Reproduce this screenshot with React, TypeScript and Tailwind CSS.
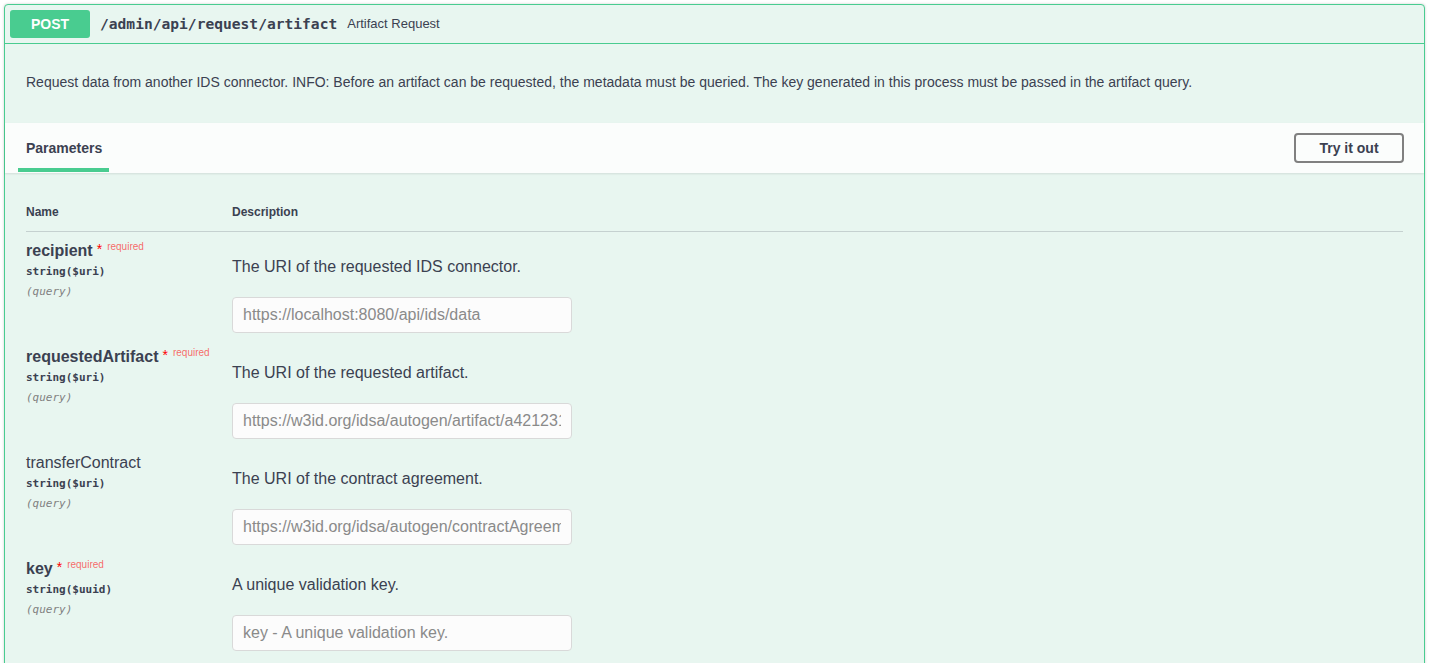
const sans = 'font-["Liberation_Sans",Arial,sans-serif]';
const mono = 'font-["DejaVu_Sans_Mono","Liberation_Mono",monospace]';

type Param = {
  name: string;
  required: boolean;
  type: string;
  description: string;
  placeholder: string;
};

const params: Param[] = [
  {
    name: 'recipient',
    required: true,
    type: 'string($uri)',
    description: 'The URI of the requested IDS connector.',
    placeholder: 'https://localhost:8080/api/ids/data',
  },
  {
    name: 'requestedArtifact',
    required: true,
    type: 'string($uri)',
    description: 'The URI of the requested artifact.',
    placeholder: 'https://w3id.org/idsa/autogen/artifact/a4212311-86e4-40b3-ace3-ef29cd687cf9',
  },
  {
    name: 'transferContract',
    required: false,
    type: 'string($uri)',
    description: 'The URI of the contract agreement.',
    placeholder: 'https://w3id.org/idsa/autogen/contractAgreement/a4212311-86e4-40b3-ace3-ef29cd687cf9',
  },
  {
    name: 'key',
    required: true,
    type: 'string($uuid)',
    description: 'A unique validation key.',
    placeholder: 'key - A unique validation key.',
  },
];

function ParamRow({ p }: { p: Param }) {
  return (
    <div className="flex h-[106px]">
      <div className="w-[206px] shrink-0 pt-[9px]">
        <div className="flex items-start leading-[20px]">
          <span className={`text-[16px] ${p.required ? 'font-bold' : 'font-normal'} text-[#3b4151]`}>
            {p.name}
          </span>
          {p.required && (
            <>
              <span className="ml-[4px] text-[14px] leading-[16px] text-[#ff0000]">*</span>
              <span className="ml-[5px] text-[10px] leading-[12px] text-[rgba(255,0,0,0.6)]">required</span>
            </>
          )}
        </div>
        <div className={`${mono} mt-[4px] text-[11px] font-semibold leading-[14px] text-[#3b4151]`}>
          {p.type}
        </div>
        <div className={`${mono} mt-[6px] text-[11px] italic leading-[14px] text-[#808080]`}>
          (query)
        </div>
      </div>
      <div className="flex-1 pt-[25px]">
        <p className="text-[16px] leading-[20px] text-[#3b4151]">{p.description}</p>
        <input
          type="text"
          placeholder={p.placeholder}
          className={`${sans} mt-[20px] h-[36px] w-[340px] rounded-[4px] border border-[#d9d9d9] bg-[#fcfcfc] px-[10px] text-[16px] text-[#3b4151] outline-none placeholder:text-[#8a8a8a]`}
        />
      </div>
    </div>
  );
}

export default function App() {
  return (
    <div className={`${sans} min-h-[663px] bg-white pl-[4px] pt-[4px]`}>
      <div className="w-[1421px] rounded-[4px] border border-[#49cc90] bg-[#e8f6f0] shadow-[0_0_3px_rgba(0,0,0,0.19)]">
        {/* summary */}
        <div className="flex items-center border-b border-[#49cc90] p-[5px]">
          <span className="flex h-[28px] w-[80px] items-center justify-center rounded-[3px] bg-[#49cc90] text-[14px] font-bold text-white">
            POST
          </span>
          <span className={`${mono} px-[10px] text-[14.6px] font-bold text-[#3b4151]`}>
            /admin/api/request/artifact
          </span>
          <span className="text-[13px] text-[#3b4151]">Artifact Request</span>
        </div>

        {/* description */}
        <div className="px-[21px] pb-[31px] pt-[28px]">
          <p className="text-[14px] leading-[20px] text-[#3b4151]">
            Request data from another IDS connector. INFO: Before an artifact can be requested, the metadata must be queried. The key generated in this process must be passed in the artifact query.
          </p>
        </div>

        {/* section header */}
        <div className="flex h-[50px] items-center justify-between bg-[rgba(255,255,255,0.8)] pl-[21px] pr-[20px] shadow-[0_1px_2px_rgba(0,0,0,0.1)]">
          <div className="relative">
            <h4 className="text-[14px] font-bold text-[#3b4151]">Parameters</h4>
            <div className="absolute left-[-8px] top-[30px] h-[4px] w-[91px] bg-[#49cc90]" />
          </div>
          <button className="h-[30px] w-[110px] rounded-[4px] border-2 border-[#808080] bg-transparent text-[14px] font-bold text-[#3b4151]">
            Try it out
          </button>
        </div>

        {/* parameters table */}
        <div className="px-[21px] pb-[60px] pt-[32px]">
          <div className="flex border-b border-[rgba(59,65,81,0.2)] pb-[12px] text-[12px] font-bold leading-[14px] text-[#3b4151]">
            <div className="w-[206px]">Name</div>
            <div>Description</div>
          </div>
          {params.map((p) => (
            <ParamRow key={p.name} p={p} />
          ))}
        </div>
      </div>
    </div>
  );
}
